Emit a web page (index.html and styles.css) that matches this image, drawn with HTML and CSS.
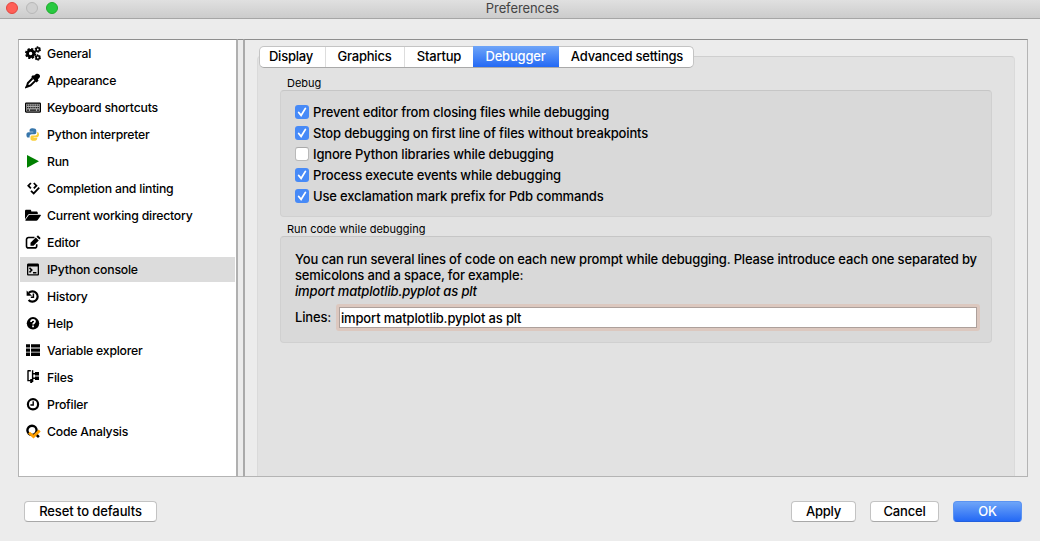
FILE: index.html
```html
<!DOCTYPE html>
<html lang="en">
<head>
<meta charset="utf-8">
<title>Preferences</title>
<link rel="stylesheet" href="styles.css">
</head>
<body>
<div class="window">
  <header class="titlebar">
    <div class="lights"><i class="light close"></i><i class="light minimize"></i><i class="light maximize"></i></div>
    <span class="title">Preferences</span>
  </header>
  <main class="panes">
    <nav class="sidebar">
      <div class="item"><svg class="icon" viewBox="0 0 16 16"><circle cx="5.6" cy="7.5" r="3.1" fill="none" stroke="#000" stroke-width="2.8"/><circle cx="5.6" cy="7.5" r="4.7" fill="none" stroke="#000" stroke-width="1.8" stroke-dasharray="2.2 1.49"/><circle cx="12.8" cy="3.5" r="1.7" fill="none" stroke="#000" stroke-width="1.6"/><circle cx="12.8" cy="3.5" r="2.6" fill="none" stroke="#000" stroke-width="1.2" stroke-dasharray="1.5 1.22"/><circle cx="12.8" cy="11.5" r="1.7" fill="none" stroke="#000" stroke-width="1.6"/><circle cx="12.8" cy="11.5" r="2.6" fill="none" stroke="#000" stroke-width="1.2" stroke-dasharray="1.5 1.22"/></svg><span>General</span></div>
      <div class="item"><svg class="icon" viewBox="0 0 16 16"><path d="M8.8 2.8 11 1.1C13 -.4 16.2 2 14.6 4.4L12.8 6.6l.8.9-2 2L6.2 4.1l1.8-2z"/><path d="M7.6 5.3 2.9 10 2.2 12.5 1.4 14l1.8-.7 2.4-.8 4.9-4.9" fill="none" stroke="#000" stroke-width="2"/></svg><span>Appearance</span></div>
      <div class="item"><svg class="icon" viewBox="0 0 16 16"><rect x=".6" y="3.1" width="14.8" height="9" rx=".7" fill="#aaa" stroke="#000" stroke-width="1.2"/><path d="M2 5.2h12M2 7.6h12" stroke="#222" stroke-width="1.2" stroke-dasharray="1.2 .6"/><path d="M2 10.1h2m1 0h6m1 0h2" stroke="#111" stroke-width="1.2"/></svg><span>Keyboard shortcuts</span></div>
      <div class="item"><svg class="icon" viewBox="0 0 16 16"><g transform="translate(-.2 -.3)"><path d="M8 1.5c-3 0-3.2 1.2-3.2 2.5v1h3.7v.6H3.7C2.3 5.6 1.6 6.6 1.6 8s.5 2.9 1.9 2.9h1.3V9.5c0-1.3.9-2 2-2h3c1 0 1.7-.7 1.7-1.7V3.7C11.5 2.2 9.9 1.5 8 1.5z" fill="#3776ab"/><path d="M12.4 5.2v1.6c0 1.2-.8 1.9-1.9 1.9h-3c-1.1 0-1.8.7-1.8 1.7V12c0 1.4 1.3 2.1 3.3 2.1 2.3 0 3.4-.9 3.4-2.1v-1H8.8v-.5h3.6c1.2 0 1.8-1.1 1.8-2.6s-.6-2.7-1.8-2.7z" fill="#f9cf3d"/></g></svg><span>Python interpreter</span></div>
      <div class="item"><svg class="icon" viewBox="0 0 16 16"><path d="M2 1 14 7.3 2 13.7z" fill="#008000"/></svg><span>Run</span></div>
      <div class="item"><svg class="icon" viewBox="0 0 16 16" fill="none" stroke="#000" stroke-width="1.8"><path d="M5.9 2 3.3 4.7l2.6 2.6M8.8 2l2.6 2.7L8.8 7.3M6 9.8l2.7 2.6 5.5-5.7"/></svg><span>Completion and linting</span></div>
      <div class="item"><svg class="icon" viewBox="0 0 16 16"><path d="M0 11.3V3.2c0-.9.6-1.4 1.4-1.4H5c1 0 1.3.7 1.3 1.6h5c1 0 1.5.6 1.5 1.5v1H5c-1 0-1.5.3-2 .9z"/><path d="M4.8 6.8h10.5c.7 0 .8.5.4 1l-3 4.2c-.4.5-.8.7-1.4.7H.9c-.7 0-.8-.4-.4-.9l3-4.3c.4-.5.8-.7 1.3-.7z"/></svg><span>Current working directory</span></div>
      <div class="item"><svg class="icon" viewBox="0 0 16 16"><path d="M9.5 2.5h-6a2 2 0 0 0-2 2v6.4a2 2 0 0 0 2 2h6.2a2 2 0 0 0 2-2V9.3" fill="none" stroke="#000" stroke-width="1.6"/><path d="m5.5 7.8 5.3-5.4 3 3-5.3 5.4h-3zM11.5 1.7l.8-.8c.4-.4.9-.4 1.3 0l1.6 1.6c.4.4.4.9 0 1.3l-.8.8z"/></svg><span>Editor</span></div>
      <div class="item selected"><svg class="icon" viewBox="0 0 16 16"><path fill-rule="evenodd" d="M3.4 1.6h9.2c.8 0 1.4.6 1.4 1.4v9.2c0 .8-.6 1.4-1.4 1.4H3.4c-.8 0-1.4-.6-1.4-1.4V3c0-.8.6-1.4 1.4-1.4zm-.1 2.9v7.8h9.4V4.5z"/><path d="m4.5 5.9 2.3 2.2-2.3 2.3M8 10.8h3.4" fill="none" stroke="#000" stroke-width="1.5"/></svg><span>IPython console</span></div>
      <div class="item"><svg class="icon" viewBox="0 0 16 16"><path d="M3.8 3.8a5.2 5.2 0 1 1-.2 7.2" fill="none" stroke="#000" stroke-width="2.2"/><path d="M1.6 1.4v5.4H7z"/><path d="M8.4 4.6v3.6H5.8" fill="none" stroke="#000" stroke-width="1.5"/></svg><span>History</span></div>
      <div class="item"><svg class="icon" viewBox="0 0 16 16"><circle cx="8" cy="7.3" r="6.2"/><path d="M6 5.9c0-2.7 4-2.5 4-.4C10 7 8.1 7 8.1 8.6" fill="none" stroke="#fff" stroke-width="1.7"/><path d="M7.2 9.5h1.7v1.7H7.2z" fill="#fff"/></svg><span>Help</span></div>
      <div class="item"><svg class="icon" viewBox="0 0 16 16"><path d="M1 1.2h4v3.4H1zm5 0h9v3.4H6zM1 5.4h4v3.4H1zm5 0h9v3.4H6zM1 9.6h4V13H1zm5 0h9V13H6z"/></svg><span>Variable explorer</span></div>
      <div class="item"><svg class="icon" viewBox="0 0 16 16"><path d="M3 .2v10.4h3.2M3 .8h2.8M7.6.2v11.7M7.6 3.8h3M7.6 8.2h3" fill="none" stroke="#000" stroke-width="1.4"/><path d="M10 2h4v3.5h-4zm0 4.6h4v3.5h-4zM5.2 9.1h2v3.8h-2z"/></svg><span>Files</span></div>
      <div class="item"><svg class="icon" viewBox="0 0 16 16" fill="none" stroke="#000"><circle cx="8" cy="7.3" r="5.1" stroke-width="2.2"/><path d="M8.2 4.2v3.8H5.4" stroke-width="1.4"/></svg><span>Profiler</span></div>
      <div class="item"><svg class="icon" viewBox="0 0 16 16" fill="none"><circle cx="7" cy="6.3" r="4.6" stroke="#000" stroke-width="2.4"/><path d="m10.7 10 3.2 3.2" stroke="#000" stroke-width="2.5"/><path d="m4 8.7 4.5 3.9 6.2-6.2" stroke="#ffa000" stroke-width="2.8"/></svg><span>Code Analysis</span></div>
    </nav>
    <div class="splitter"></div>
    <section class="content">
      <div class="tabpage">
        <div class="tabs"><span class="tab t1">Display</span><span class="tab t2">Graphics</span><span class="tab t3">Startup</span><span class="tab t4 active">Debugger</span><span class="tab t5">Advanced settings</span></div>
        <h2 class="caption">Debug</h2>
        <div class="group checks">
          <div class="check"><span class="box on"><svg viewBox="0 0 14 14"><path d="m3.7 7.5 2.4 2.9 4.3-7"/></svg></span><span>Prevent editor from closing files while debugging</span></div>
          <div class="check"><span class="box on"><svg viewBox="0 0 14 14"><path d="m3.7 7.5 2.4 2.9 4.3-7"/></svg></span><span>Stop debugging on first line of files without breakpoints</span></div>
          <div class="check"><span class="box"></span><span>Ignore Python libraries while debugging</span></div>
          <div class="check"><span class="box on"><svg viewBox="0 0 14 14"><path d="m3.7 7.5 2.4 2.9 4.3-7"/></svg></span><span>Process execute events while debugging</span></div>
          <div class="check"><span class="box on"><svg viewBox="0 0 14 14"><path d="m3.7 7.5 2.4 2.9 4.3-7"/></svg></span><span>Use exclamation mark prefix for Pdb commands</span></div>
        </div>
        <h2 class="caption second">Run code while debugging</h2>
        <div class="group code">
          <p class="note">You can run several lines of code on each new prompt while debugging. Please introduce each one separated by<br>semicolons and a space, for example:<br><em>import matplotlib.pyplot as plt</em></p>
          <div class="field"><span class="label">Lines:</span><div class="input">import matplotlib.pyplot as plt</div></div>
        </div>
      </div>
    </section>
  </main>
  <footer class="footer">
    <span class="button reset">Reset to defaults</span>
    <span class="button apply">Apply</span>
    <span class="button cancel">Cancel</span>
    <span class="button ok">OK</span>
  </footer>
</div>
</body>
</html>
```
FILE: styles.css
```css
* { box-sizing: border-box; }
body { margin: 0; background: #ececec; color: #000; font-family: Inter, "Liberation Sans", sans-serif; font-size: 13px; font-weight: 500; letter-spacing: -0.2px; }
.window { width: 1040px; height: 541px; overflow: hidden; display: flex; flex-direction: column; white-space: nowrap; }
.titlebar { height: 19px; flex: none; display: grid; grid-template-columns: 1fr auto 1fr; background: linear-gradient(#e0e0e0, #cccccc); border-bottom: 1px solid #a6a6a6; line-height: 17px; color: #444; font-weight: 400; letter-spacing: -0.1px; }
.title { padding-left: 5px; }
.lights { display: flex; gap: 8px; padding: 2px 0 0 6px; }
.light { width: 12px; height: 12px; border-radius: 50%; border: 1px solid; }
.close { background: #ff5f57; border-color: #e2463f; }
.minimize { background: #d0d0d0; border-color: #b8b8b8; }
.maximize { background: #28c940; border-color: #1dad2b; }
.panes { display: flex; margin: 20px 12px 0 18px; height: 438px; flex: none; }
.sidebar { width: 220px; background: #fff; border: 1px solid #b4b4b4; border-right: 2px solid #b0b0b0; border-top-color: #8e8e8e; }
.item { height: 27px; margin: 0 1px; padding-left: 5px; display: flex; align-items: center; gap: 6px; font-size: 12.25px; letter-spacing: -0.22px; }
.selected { height: 25px; margin: 1px 1px; background: #dcdcdc; }
.icon { width: 16px; height: 16px; flex: none; }
.splitter { width: 5px; border-top: 1px solid #8e8e8e; border-bottom: 1px solid #b4b4b4; }
.content { flex: 1; border: 1px solid #b4b4b4; border-top-color: #8e8e8e; border-left: 2px solid #aaa; padding: 16px 12px 0 12px; }
.tabpage { height: 420px; background: #e2e2e2; border: 1px solid #dadada; border-top-color: #cfcfcf; border-bottom: 0; border-radius: 4px 4px 0 0; padding: 0 22px; }
.tabs { display: flex; width: 435px; height: 22px; margin: -11px 0 0 -21px; background: #fff; border: 1px solid #c4c4c4; border-bottom-color: #a9a9a9; border-radius: 5px; line-height: 19px; }
.tab { flex: none; text-align: center; border-right: 1px solid #ddd; height: 20px; padding-right: 1px; }
.t1 { width: 66px; padding-right: 3px; } .t2 { width: 79px; } .t3 { width: 68px; border: 0; padding: 0; } .t4 { width: 86px; } .t5 { width: 134px; border: 0; padding-left: 3px; }
.active { height: 21px; margin-top: -1px; line-height: 21px; border: 0; color: #fff; background: linear-gradient(#6ea5f8, #2469f5); }
.caption { margin: 8px 0 0 7px; height: 14px; line-height: 15px; font-size: 11px; font-weight: 400; letter-spacing: 0; }
.second { margin-top: 5px; }
.group { background: #d9d9d9; border: 1px solid #d0d0d0; border-top-color: #c6c6c6; border-radius: 4px; letter-spacing: -0.163px; }
.checks { height: 127px; padding: 10px 14px; }
.check { display: flex; align-items: center; height: 21px; gap: 4px; }
.box { width: 14px; height: 14px; border-radius: 3px; background: #fff; border: 1px solid #b9b9b9; border-top-color: #a9a9a9; }
.on { border: 0; background: #478af7; }
.box svg { display: block; width: 14px; height: 14px; fill: none; stroke: #fff; stroke-width: 1.8; stroke-linecap: round; }
.code { height: 107px; padding: 14px 11px 0 14px; }
.note { margin: 0; line-height: 16px; }
.field { display: flex; align-items: center; margin-top: 5px; }
.label { width: 41px; flex: none; line-height: 16px; padding-bottom: 1px; }
.input { flex: 1; height: 27px; border: 3px solid #dcc8bf; border-radius: 3px; background: #fff; box-shadow: inset 0 0 0 1px #ada09b; padding-left: 2px; line-height: 22px; }
.footer { display: flex; padding: 24px 18px 0 24px; }
.button { height: 21px; line-height: 19px; border: 1px solid #c3c3c3; border-bottom-color: #a8a8a8; border-radius: 4px; background: #fff; text-align: center; }
.reset { width: 133px; margin-right: auto; letter-spacing: -0.1px; }
.apply { width: 65px; margin-right: 14px; }
.cancel { width: 69px; margin-right: 14px; }
.ok { width: 69px; color: #fff; border-color: #5a93f2; border-bottom-color: #2260dd; background: linear-gradient(#6ea5f8, #2469f5); }
```
